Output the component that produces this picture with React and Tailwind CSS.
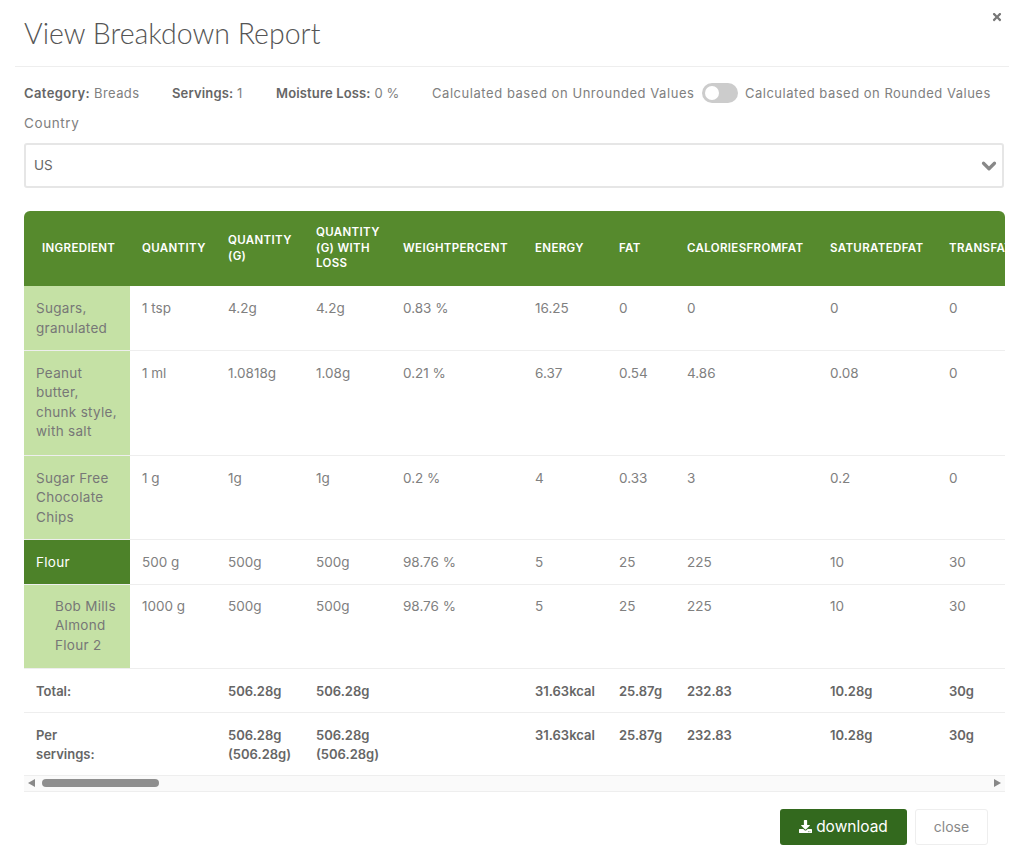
import { ChevronDown } from 'lucide-react';
import { FaDownload, FaTimes } from 'react-icons/fa';

const headers = ['INGREDIENT', 'QUANTITY', 'QUANTITY (G)', 'QUANTITY (G) WITH LOSS', 'WEIGHTPERCENT', 'ENERGY', 'FAT', 'CALORIESFROMFAT', 'SATURATEDFAT', 'TRANSFAT'];

const rows = [
  { name: 'Sugars, granulated', h: 'h-[64px]', pad: 'pt-[13px] pb-[11px]', cells: ['1 tsp', '4.2g', '4.2g', '0.83 %', '16.25', '0', '0', '0', '0'] },
  { name: 'Peanut butter, chunk style, with salt', h: 'h-[105px]', pad: 'pt-[13px] pb-[11px]', cells: ['1 ml', '1.0818g', '1.08g', '0.21 %', '6.37', '0.54', '4.86', '0.08', '0'] },
  { name: 'Sugar Free Chocolate Chips', h: 'h-[84px]', pad: 'pt-[13px] pb-[11px]', cells: ['1 g', '1g', '1g', '0.2 %', '4', '0.33', '3', '0.2', '0'] },
  { name: 'Flour', group: true, h: 'h-[45px]', pad: 'pt-[13px] pb-[11px]', cells: ['500 g', '500g', '500g', '98.76 %', '5', '25', '225', '10', '30'] },
  { name: 'Bob Mills Almond Flour 2', child: true, h: 'h-[84px]', pad: 'py-[12px]', cells: ['1000 g', '500g', '500g', '98.76 %', '5', '25', '225', '10', '30'] },
];

const colWidths = ['w-[106px]', 'w-[86px]', 'w-[88px]', 'w-[87px]', 'w-[132px]', 'w-[84px]', 'w-[68px]', 'w-[143px]', 'w-[119px]', 'w-[119px]'];

export default function App() {
  return (
    <div className="relative w-[1024px] h-[851px] overflow-hidden bg-white text-[13.5px] leading-[19.5px] text-[#808080] font-['Inter',sans-serif]">
      <button type="button" className="absolute top-[11px] right-[21px] text-[#777] text-[12px]">
        <FaTimes />
      </button>

      <div className="mx-[15px] h-[67px] border-b border-[#eee] pl-[9px] pt-[13px]">
        <h1 className="text-[28.5px] leading-[40px] font-light text-[#555] font-['Lato',sans-serif]">View Breakdown Report</h1>
      </div>

      <div className="px-[24px]">
        <div className="flex items-center h-[20px] mt-[17px] tracking-[0.15px] whitespace-nowrap text-[13px]">
          <span className="w-[148px] tracking-[0.4px]"><b className="font-semibold text-[#666]">Category:</b> Breads</span>
          <span className="w-[104px]"><b className="font-semibold text-[#666]">Servings:</b> 1</span>
          <span className="w-[156px]"><b className="font-semibold text-[#666]">Moisture Loss:</b> 0 %</span>
          <span className="w-[270px] tracking-[0.55px]">Calculated based on Unrounded Values</span>
          <span className="w-[36px] h-[20px] rounded-full bg-[#ccc] p-[3px] mr-[7px] mb-[2px] shrink-0">
            <span className="block w-[14px] h-[14px] rounded-full bg-white" />
          </span>
          <span className="tracking-[0.5px]">Calculated based on Rounded Values</span>
        </div>

        <div className="mt-[10px] h-[20px] tracking-[0.6px]">Country</div>

        <div className="mt-[9px] flex items-center justify-between w-[980px] h-[45px] border-2 border-[#e6e6e6] rounded-[3px] pl-[8px] pr-[2px] text-[#666]">
          <span>US</span>
          <ChevronDown className="w-[22px] h-[22px] text-[#888]" strokeWidth={3.5} />
        </div>

        <div className="mt-[23px] w-[981px] overflow-hidden rounded-t-[6px]">
          <table className="table-fixed border-collapse w-[1032px]">
            <colgroup>
              {colWidths.map((w, i) => <col key={i} className={w} />)}
            </colgroup>
            <thead>
              <tr className="h-[75px] bg-[#568a2d] text-white text-[11.5px] leading-[15.5px] font-semibold text-left tracking-[0.35px]">
                {headers.map((h, i) => (
                  <th key={h} className={`font-semibold whitespace-normal ${i === 0 ? 'pl-[18px] pr-0' : 'px-[12px]'}`}>
                    {h}
                  </th>
                ))}
              </tr>
            </thead>
            <tbody>
              {rows.map(r => (
                <tr key={r.name} className={`${r.h} border-b border-[#eee]`}>
                  <td className={`${r.pad} pr-[12px] tracking-[0.3px] align-top ${r.group ? 'bg-[#4d8229] text-white' : 'bg-[#c5e1a5] text-[#777]'} ${r.child ? 'pl-[31px]' : 'pl-[12px]'}`}>
                    {r.name}
                  </td>
                  {r.cells.map((c, i) => (
                    <td key={i} className={`align-top px-[12px] ${r.pad}`}>{c}</td>
                  ))}
                </tr>
              ))}
              <tr className="h-[44px] border-b border-[#eee] font-semibold text-[#666] text-[13px] align-top">
                <td className="pl-[12px] pt-[13px]" colSpan={2}>Total:</td>
                <td className="px-[12px] pt-[13px]">506.28g</td>
                <td className="px-[12px] pt-[13px]">506.28g</td>
                <td />
                <td className="px-[12px] pt-[13px]">31.63kcal</td>
                <td className="px-[12px] pt-[13px]">25.87g</td>
                <td className="px-[12px] pt-[13px]">232.83</td>
                <td className="px-[12px] pt-[13px]">10.28g</td>
                <td className="px-[12px] pt-[13px]">30g</td>
              </tr>
              <tr className="h-[62px] font-semibold text-[#666] text-[13px] align-top">
                <td className="pl-[12px] pt-[13px] pb-[10px]" colSpan={2}>Per<br />servings:</td>
                <td className="px-[12px] pt-[13px] pb-[10px]">506.28g<br />(506.28g)</td>
                <td className="px-[12px] pt-[13px] pb-[10px]">506.28g<br />(506.28g)</td>
                <td />
                <td className="px-[12px] pt-[13px] pb-[10px]">31.63kcal</td>
                <td className="px-[12px] pt-[13px] pb-[10px]">25.87g</td>
                <td className="px-[12px] pt-[13px] pb-[10px]">232.83</td>
                <td className="px-[12px] pt-[13px] pb-[10px]">10.28g</td>
                <td className="px-[12px] pt-[13px] pb-[10px]">30g</td>
              </tr>
            </tbody>
          </table>
        </div>

        <div className="flex items-center w-[981px] h-[17px] bg-[#fafafa] border-y border-[#eee] px-[4px]">
          <span className="w-0 h-0 border-y-[4px] border-y-transparent border-r-[7px] border-r-[#888]" />
          <span className="ml-[7px] w-[117px] h-[8px] rounded-full bg-[#8f8f8f]" />
          <span className="ml-auto w-0 h-0 border-y-[4px] border-y-transparent border-l-[7px] border-l-[#888]" />
        </div>

        <div className="mt-[17px] flex justify-end gap-[8px] w-[964px]">
          <button type="button" className="flex items-center justify-center gap-[4px] w-[127px] h-[36px] rounded-[3px] bg-[#33691e] text-white text-[15.5px]">
            <FaDownload className="w-[13px] h-[13px]" />
            download
          </button>
          <button type="button" className="w-[73px] h-[36px] rounded-[3px] border border-[#eee] text-[#888] text-[14px]">close</button>
        </div>
      </div>
    </div>
  );
}
